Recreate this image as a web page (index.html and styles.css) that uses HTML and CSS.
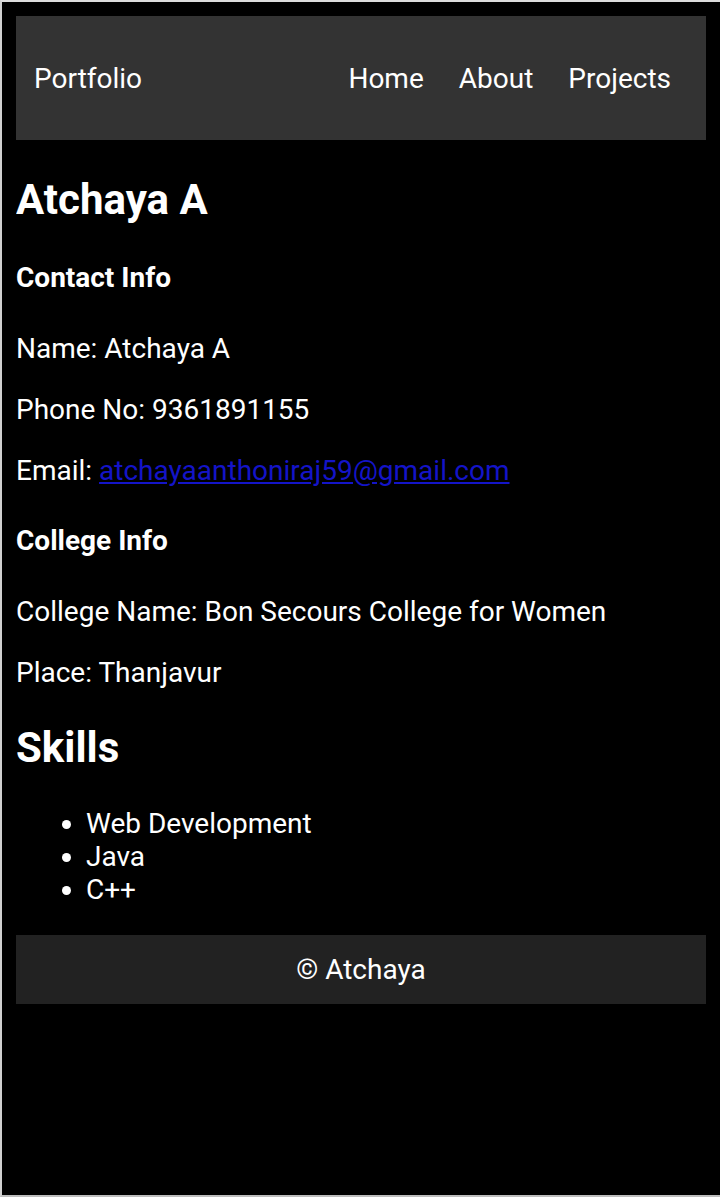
FILE: index.html
```html
<!DOCTYPE html>
<html lang="en">
<head>
<meta charset="utf-8">
<title>Portfolio</title>
<link rel="stylesheet" href="styles.css">
</head>
<body>
<nav class="nav">
  <div class="brand">Portfolio</div>
  <ul class="nav-links">
    <li>Home</li>
    <li>About</li>
    <li>Projects</li>
  </ul>
</nav>
<h2 class="title">Atchaya A</h2>
<h4 class="sub">Contact Info</h4>
<p class="line">Name: Atchaya A</p>
<p class="line">Phone No: 9361891155</p>
<p class="line">Email: <a class="mail" href="#">atchayaanthoniraj59@gmail.com</a></p>
<h4 class="sub">College Info</h4>
<p class="line">College Name: Bon Secours College for Women</p>
<p class="line">Place: Thanjavur</p>
<h2 class="title">Skills</h2>
<ul class="skills">
  <li>Web Development</li>
  <li>Java</li>
  <li>C++</li>
</ul>
<footer class="footer">© Atchaya</footer>
</body>
</html>
```
FILE: styles.css
```css
html {
  background: #000;
  border-top: 2px solid #dcdcdc;
  border-left: 2px solid #d0d0d0;
  border-bottom: 2px solid #bdbdbd;
  box-sizing: border-box;
  min-height: 100vh;
}
body {
  margin: 14px;
  font-family: Roboto, "Noto Sans", sans-serif;
  font-size: 28px;
  line-height: normal;
  color: #fff;
  background: #000;
}
.nav {
  display: flex;
  justify-content: space-between;
  align-items: center;
  background: #333;
  padding: 18px 17.5px 17px 18px;
}
.brand {
  line-height: 33px;
}
.nav-links {
  display: flex;
  list-style: none;
  margin: 28px 0;
  padding: 0;
  line-height: 33px;
}
.nav-links li {
  margin-left: 35px;
}
.nav-links li:last-child {
  margin-right: 17.5px;
}
.title {
  font-size: 42px;
  font-weight: 700;
  margin: 34.5px 0;
}
.sub {
  font-size: 28px;
  font-weight: 700;
  margin: 37.5px 0;
}
.line {
  margin: 28px 0;
}
.mail {
  color: #1414c8;
}
.skills {
  margin: 28px 0 29px;
  padding-left: 70px;
}
.footer {
  background: #222;
  text-align: center;
  padding: 18px 17px;
}
```
